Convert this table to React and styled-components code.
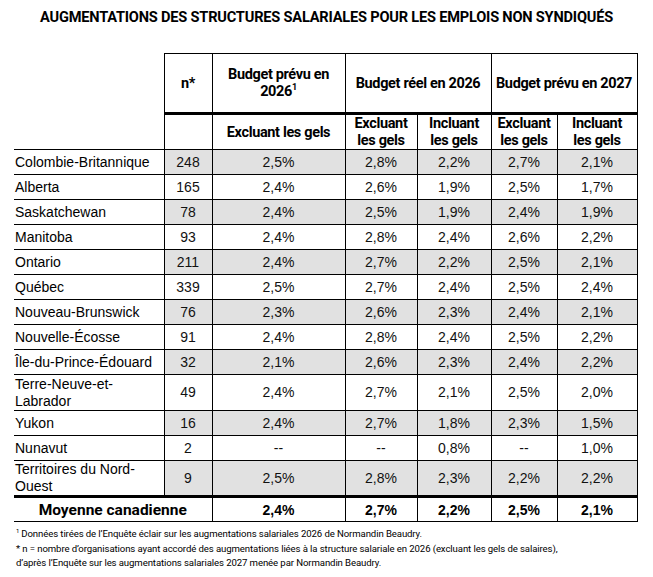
import React from 'react';
import styled, { createGlobalStyle } from 'styled-components';

const GlobalStyle = createGlobalStyle`
  body {
    margin: 0;
    background: #ffffff;
    color: #000000;
    font-family: 'Liberation Sans', Arial, sans-serif;
  }
`;

const Page = styled.div`
  width: 653px;
  padding: 9px 0 0 0;
`;

const Title = styled.h1`
  margin: 0 0 28px 0;
  text-align: center;
  font-family: Roboto, 'Liberation Sans', sans-serif;
  font-size: 14.6px;
  font-weight: 700;
  letter-spacing: -0.2px;
  line-height: 16px;
`;

const Table = styled.table`
  margin-left: 14px;
  border-collapse: collapse;
  table-layout: fixed;
  width: 623px;
`;

const HeadRow = styled.tr`
  height: ${(p) => p.$h}px;
`;

const HeadCell = styled.th`
  font-family: Roboto, 'Liberation Sans', sans-serif;
  font-size: 14.5px;
  font-weight: 700;
  letter-spacing: -0.35px;
  line-height: 17px;
  text-align: center;
  padding: 0 3px;
  border: 1px solid #000;
  ${(p) => p.$thick && 'border-bottom: 3px solid #000;'}
  ${(p) => p.$blank && 'border: none;'}
  ${(p) => p.$blankBottom && 'border: none; border-bottom: 1px solid #000;'}
`;

const Sup = styled.sup`
  font-size: 9px;
  line-height: 0;
`;

const Row = styled.tr`
  height: ${(p) => (p.$tall ? 36 : 25)}px;
`;

const NameCell = styled.td`
  font-size: 14px;
  line-height: 17px;
  padding: 0 2px 0 1px;
  border-top: 1px solid #000;
  border-bottom: 1px solid #000;
  border-right: 1px solid #000;
`;

const Cell = styled.td`
  font-size: 14px;
  line-height: 17px;
  text-align: center;
  padding: 0;
  color: #111;
  border: 1px solid #000;
  background: ${(p) => (p.$shade ? '#e1e1e1' : '#ffffff')};
`;

const TotalRow = styled.tr`
  height: 25px;
`;

const TotalLabel = styled.td`
  font-family: Roboto, 'Liberation Sans', sans-serif;
  font-size: 15.5px;
  font-weight: 700;
  text-align: center;
  border-top: 3px solid #000;
  border-bottom: 1px solid #000;
  border-right: 1px solid #000;
`;

const TotalCell = styled.td`
  font-size: 14px;
  font-weight: 700;
  text-align: center;
  border: 1px solid #000;
  border-top: 3px solid #000;
`;

const Notes = styled.div`
  margin: 5px 0 0 16px;
  font-family: Roboto, 'Liberation Sans', sans-serif;
  font-size: 9.6px;
  line-height: 14.5px;
  letter-spacing: -0.1px;
`;

const NoteSup = styled.sup`
  font-size: 6px;
  line-height: 0;
  margin-right: 2px;
`;

const rows = [
  ['Colombie-Britannique', '248', '2,5%', '2,8%', '2,2%', '2,7%', '2,1%'],
  ['Alberta', '165', '2,4%', '2,6%', '1,9%', '2,5%', '1,7%'],
  ['Saskatchewan', '78', '2,4%', '2,5%', '1,9%', '2,4%', '1,9%'],
  ['Manitoba', '93', '2,4%', '2,8%', '2,4%', '2,6%', '2,2%'],
  ['Ontario', '211', '2,4%', '2,7%', '2,2%', '2,5%', '2,1%'],
  ['Québec', '339', '2,5%', '2,7%', '2,4%', '2,5%', '2,4%'],
  ['Nouveau-Brunswick', '76', '2,3%', '2,6%', '2,3%', '2,4%', '2,1%'],
  ['Nouvelle-Écosse', '91', '2,4%', '2,8%', '2,4%', '2,5%', '2,2%'],
  ['Île-du-Prince-Édouard', '32', '2,1%', '2,6%', '2,3%', '2,4%', '2,2%'],
  ['Terre-Neuve-et-Labrador', '49', '2,4%', '2,7%', '2,1%', '2,5%', '2,0%', true],
  ['Yukon', '16', '2,4%', '2,7%', '1,8%', '2,3%', '1,5%'],
  ['Nunavut', '2', '--', '--', '0,8%', '--', '1,0%'],
  ['Territoires du Nord-Ouest', '9', '2,5%', '2,8%', '2,3%', '2,2%', '2,2%', true],
];

const widths = [150, 48, 133, 72, 74, 66, 80];

const TwoLine = ({ first }) => (
  <>
    {first}
    <br />
    les gels
  </>
);

export default function App() {
  return (
    <Page>
      <GlobalStyle />
      <Title>AUGMENTATIONS DES STRUCTURES SALARIALES POUR LES EMPLOIS NON SYNDIQUÉS</Title>
      <Table>
        <colgroup>
          {widths.map((w, i) => (
            <col key={i} style={{ width: w }} />
          ))}
        </colgroup>
        <thead>
          <HeadRow $h={60}>
            <HeadCell $blank />
            <HeadCell $thick>n*</HeadCell>
            <HeadCell $thick>
              Budget prévu en
              <br />
              2026<Sup>1</Sup>
            </HeadCell>
            <HeadCell $thick colSpan={2}>Budget réel en 2026</HeadCell>
            <HeadCell $thick colSpan={2}>Budget prévu en 2027</HeadCell>
          </HeadRow>
          <HeadRow $h={35}>
            <HeadCell $blankBottom />
            <HeadCell />
            <HeadCell>Excluant les gels</HeadCell>
            <HeadCell><TwoLine first="Excluant" /></HeadCell>
            <HeadCell><TwoLine first="Incluant" /></HeadCell>
            <HeadCell><TwoLine first="Excluant" /></HeadCell>
            <HeadCell><TwoLine first="Incluant" /></HeadCell>
          </HeadRow>
        </thead>
        <tbody>
          {rows.map((r, i) => {
            const shade = i % 2 === 0;
            return (
              <Row key={r[0]} $tall={r[7]}>
                <NameCell>{r[0]}</NameCell>
                {r.slice(1, 7).map((v, j) => (
                  <Cell key={j} $shade={shade}>
                    {v}
                  </Cell>
                ))}
              </Row>
            );
          })}
          <TotalRow>
            <TotalLabel colSpan={2}>Moyenne canadienne</TotalLabel>
            <TotalCell>2,4%</TotalCell>
            <TotalCell>2,7%</TotalCell>
            <TotalCell>2,2%</TotalCell>
            <TotalCell>2,5%</TotalCell>
            <TotalCell>2,1%</TotalCell>
          </TotalRow>
        </tbody>
      </Table>
      <Notes>
        <div>
          <NoteSup>1</NoteSup>Données tirées de l’Enquête éclair sur les augmentations salariales 2026 de Normandin Beaudry.
        </div>
        <div>
          * n = nombre d’organisations ayant accordé des augmentations liées à la structure salariale en 2026 (excluant les gels de salaires),
        </div>
        <div>d’après l’Enquête sur les augmentations salariales 2027 menée par Normandin Beaudry.</div>
      </Notes>
    </Page>
  );
}
